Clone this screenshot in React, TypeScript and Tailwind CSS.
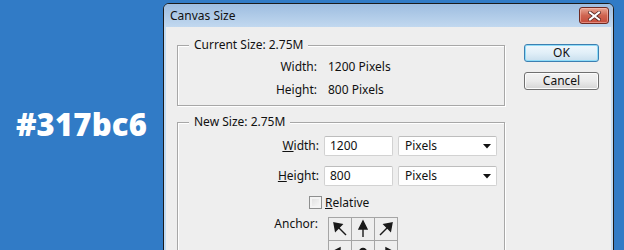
import React from 'react'

const txt = 'text-[12px] leading-[16px] text-[#111]'

function Arrow({ dir }: { dir: string }) {
  const paths: Record<string, React.ReactNode> = {
    nw: <><path d="M17 17L8 8" /><polygon points="5,5 13,6.5 6.5,13" /></>,
    n: <><path d="M11 19V8" /><polygon points="11,3 7,11 15,11" /></>,
    ne: <><path d="M5 17L14 8" /><polygon points="17,5 9,6.5 15.5,13" /></>,
    w: <><path d="M19 11H8" /><polygon points="3,11 11,7 11,15" /></>,
    c: <circle cx="11" cy="11" r="3.5" />,
    e: <><path d="M3 11H14" /><polygon points="19,11 11,7 11,15" /></>,
  }
  return (
    <svg width="22" height="22" viewBox="0 0 22 22" fill="#1a1a1a" stroke="#1a1a1a" strokeWidth="1.4">
      {paths[dir]}
    </svg>
  )
}

function Select() {
  return (
    <div className="ml-[5px] w-[99px] h-[20px] bg-white border border-[#d2d2d2] border-t-[#bdbdbd] rounded-[2px] flex items-center justify-between pl-[6px] pr-[5px]">
      <span className={txt}>Pixels</span>
      <svg width="8" height="5" viewBox="0 0 8 5"><polygon points="0,0 8,0 4,4.5" fill="#111" /></svg>
    </div>
  )
}

export default function App() {
  return (
    <div className="w-[624px] h-[250px] bg-[#317bc6] flex overflow-hidden font-['Noto_Sans',sans-serif]">
      <div className="w-[163px] shrink-0 flex items-center justify-center">
        <span className="text-white text-[31px] font-extrabold font-['Open_Sans',sans-serif] tracking-[0.2px] pb-[2px]">#317bc6</span>
      </div>

      <div className="mt-[3px] w-[451px] h-[260px] shrink-0 flex flex-col rounded-t-[6px] border border-[#1b1b1b] bg-[#c4dcf2] overflow-hidden">
        {/* title bar */}
        <div className="h-[23px] shrink-0 flex items-start justify-between pl-[6px] pr-[4px] bg-gradient-to-b from-[#9ebde0] to-[#c1d8ef]">
          <span className={`${txt} mt-[4px]`}>Canvas Size</span>
          <div className="mt-[3px] w-[30px] h-[17px] rounded-[3px] border border-[#6e2a22] bg-gradient-to-b from-[#e7a796] via-[#cf6450] to-[#c44a3a] flex items-center justify-center shadow-[inset_0_0_0_1px_rgba(255,200,190,0.5)]">
            <svg width="13" height="10" viewBox="0 0 13 10">
              <path d="M2 1.5L11 8.5M11 1.5L2 8.5" stroke="#5a2a25" strokeWidth="3.6" strokeLinecap="square" />
              <path d="M2 1.5L11 8.5M11 1.5L2 8.5" stroke="#fff" strokeWidth="2" strokeLinecap="square" />
            </svg>
          </div>
        </div>

        {/* client */}
        <div className="flex-1 mx-[2px] bg-[#eeeeee] flex items-start gap-[19px] pl-[11px] pt-[17px]">
          <div className="w-[328px] pt-[1px] flex flex-col gap-[16px]">
            {/* current size */}
            <div className="relative h-[61px] border border-[#a7a7a7] shadow-[inset_1px_1px_0_#fff,1px_1px_0_#fff]">
              <span className={`${txt} absolute -top-[9px] left-[11px] px-[5px] bg-[#eeeeee]`}>Current Size: 2.75M</span>
              <div className="pt-[13px] grid grid-cols-[139px_1fr] gap-x-[11px] gap-y-[7px]">
                <span className={`${txt} text-right`}>Width:</span>
                <span className={txt}>1200 Pixels</span>
                <span className={`${txt} text-right`}>Height:</span>
                <span className={txt}>800 Pixels</span>
              </div>
            </div>

            {/* new size */}
            <div className="relative h-[140px] border border-[#a7a7a7] shadow-[inset_1px_1px_0_#fff,1px_1px_0_#fff] pt-[13px] flex flex-col">
              <span className={`${txt} absolute -top-[9px] left-[11px] px-[5px] bg-[#eeeeee]`}>New Size: 2.75M</span>
              <div className="flex items-center h-[20px]">
                <span className={`${txt} w-[141px] text-right`}><span className="underline">W</span>idth:</span>
                <div className="ml-[5px] w-[69px] h-[20px] bg-white border border-[#d2d2d2] border-t-[#bdbdbd] rounded-[2px] flex items-center pl-[5px]">
                  <span className={txt}>1200</span>
                </div>
                <Select />
              </div>
              <div className="flex items-center h-[20px] mt-[10px]">
                <span className={`${txt} w-[141px] text-right`}><span className="underline">H</span>eight:</span>
                <div className="ml-[5px] w-[69px] h-[20px] bg-white border border-[#d2d2d2] border-t-[#bdbdbd] rounded-[2px] flex items-center pl-[5px]">
                  <span className={txt}>800</span>
                </div>
                <Select />
              </div>
              <div className="flex items-center h-[13px] mt-[10px] pl-[131px]">
                <div className="w-[13px] h-[13px] border border-[#8e8f8f] bg-gradient-to-br from-[#dcdcdc] to-[#fbfbfb] shadow-[inset_0_0_0_2px_#f4f4f4]" />
                <span className={`${txt} ml-[3px]`}><span className="underline">R</span>elative</span>
              </div>
              <div className="flex items-start mt-[8px]">
                <span className={`${txt} w-[140px] text-right mt-[-1px]`}>Anchor:</span>
                <div className="ml-[10px] grid grid-cols-[23px_23px_23px] border-l border-t border-[#a5a5a5]">
                  {['nw', 'n', 'ne', 'w', 'c', 'e'].map(d => (
                    <div key={d} className="w-[23px] h-[23px] border-r border-b border-[#a5a5a5] flex items-center justify-center">
                      <Arrow dir={d} />
                    </div>
                  ))}
                </div>
              </div>
            </div>
          </div>

          {/* buttons */}
          <div className="w-[75px] flex flex-col gap-[10px]">
            <button className="h-[18px] rounded-[3px] border border-[#3c7fb1] bg-gradient-to-b from-[#f0f7fc] via-[#e1eff8] to-[#c9dfee] shadow-[inset_0_0_0_1px_#8fdcf8] flex items-center justify-center">
              <span className={txt}>OK</span>
            </button>
            <button className="h-[18px] rounded-[3px] border border-[#707070] bg-gradient-to-b from-[#f2f2f2] via-[#ebebeb] to-[#d5d5d5] shadow-[inset_0_0_0_1px_#fcfcfc] flex items-center justify-center">
              <span className={txt}>Cancel</span>
            </button>
          </div>
        </div>
      </div>
    </div>
  )
}
